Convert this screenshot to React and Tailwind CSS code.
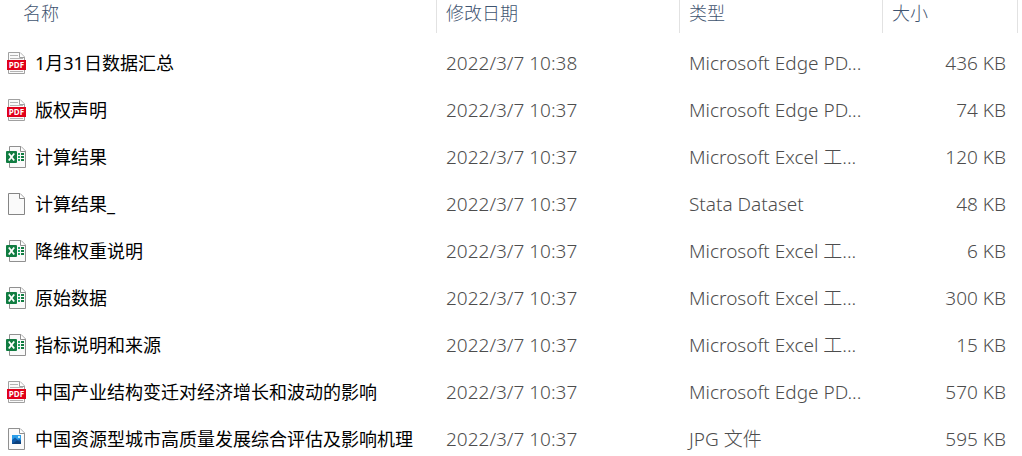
const files = [
  { name: '1月31日数据汇总', kind: 'pdf', date: '2022/3/7 10:38', type: 'Microsoft Edge PD...', size: '436 KB' },
  { name: '版权声明', kind: 'pdf', date: '2022/3/7 10:37', type: 'Microsoft Edge PD...', size: '74 KB' },
  { name: '计算结果', kind: 'excel', date: '2022/3/7 10:37', type: 'Microsoft Excel 工...', size: '120 KB' },
  { name: '计算结果_', kind: 'blank', date: '2022/3/7 10:37', type: 'Stata Dataset', size: '48 KB' },
  { name: '降维权重说明', kind: 'excel', date: '2022/3/7 10:37', type: 'Microsoft Excel 工...', size: '6 KB' },
  { name: '原始数据', kind: 'excel', date: '2022/3/7 10:37', type: 'Microsoft Excel 工...', size: '300 KB' },
  { name: '指标说明和来源', kind: 'excel', date: '2022/3/7 10:37', type: 'Microsoft Excel 工...', size: '15 KB' },
  { name: '中国产业结构变迁对经济增长和波动的影响', kind: 'pdf', date: '2022/3/7 10:37', type: 'Microsoft Edge PD...', size: '570 KB' },
  { name: '中国资源型城市高质量发展综合评估及影响机理', kind: 'image', date: '2022/3/7 10:37', type: 'JPG 文件', size: '595 KB' },
];

function Sheet({ stroke }) {
  return (
    <g fill="#fafafa" stroke={stroke}>
      <path d="M2.5 .5H14L18.5 5V21.5H2.5Z" />
      <path d="M13.5 .5V5.5H18.5" fill="#fff" />
    </g>
  );
}

function FileIcon({ kind }) {
  return (
    <svg viewBox="0 0 20 22" className="h-[22px] w-5 shrink-0" aria-hidden="true">
      {kind === 'pdf' && (
        <>
          <Sheet stroke="#a0a0a0" />
          <path d="M4 3.5H12M4 6.5H17M4 19.5H17" stroke="#b4b4b4" />
          <rect x="1" y="8" width="19" height="10" fill="#e1001a" />
          <text x="10.5" y="16" textAnchor="middle" fill="#fff" className="font-['Open_Sans',sans-serif] text-[8px] font-bold">PDF</text>
        </>
      )}
      {kind === 'excel' && (
        <>
          <path d="M3.5 .5H15L19.5 5V21.5H3.5Z" fill="#fafafa" stroke="#909090" />
          <path d="M14.5 .5V5.5H19.5" fill="#fff" stroke="#909090" />
          <path d="M12 7h2v2h-2zM12 10h2v2h-2zM12 13h2v2h-2z" fill="#21a366" />
          <path d="M15 7h3v2h-3zM15 10h3v2h-3zM15 13h3v2h-3z" fill="#107c41" />
          <rect x="0" y="5" width="11" height="12" rx="1" fill="#107c41" />
          <path d="M2.8 7.5L8.2 14.5M8.2 7.5L2.8 14.5" stroke="#fff" strokeWidth="1.8" />
        </>
      )}
      {kind === 'blank' && <Sheet stroke="#858585" />}
      {kind === 'image' && (
        <>
          <Sheet stroke="#909090" />
          <rect x="6" y="7" width="9" height="9" fill="#2b9de8" />
          <path d="M6 12L9 9.5L12 12L13.5 11L15 12.5V16H6Z" fill="#0f5aa8" />
          <path d="M6 16L11 12.5L15 14V16Z" fill="#0b3f7a" />
          <rect x="12" y="8" width="2" height="2" fill="#c5edff" />
        </>
      )}
    </svg>
  );
}

export default function App() {
  return (
    <main className="h-screen overflow-hidden bg-white pr-1 font-['Noto_Sans','Noto_Sans_CJK_SC',sans-serif] text-lg">
      <table className="w-full table-fixed border-collapse text-left whitespace-nowrap">
        <colgroup>
          <col />
          <col className="w-[243px]" />
          <col className="w-[203px]" />
          <col className="w-[135px]" />
        </colgroup>
        <thead className="text-[#3f5470]">
          <tr>
            {['名称', '修改日期', '类型', '大小'].map((label) => (
              <th key={label} scope="col" className="p-0 pb-1.5 font-light">
                <div className="h-[33px] border-r border-[#e2e2e2] pl-[9px] leading-[26px] [th:first-child_&]:pl-[23px]">
                  {label}
                </div>
              </th>
            ))}
          </tr>
        </thead>
        <tbody className="text-[19px] leading-7 font-light text-[#4d4d4d]">
          {files.map((file) => (
            <tr key={file.name} className="h-[47px]">
              <td className="p-0 text-lg leading-7 font-normal text-black">
                <div className="flex items-center gap-[9px] pl-1.5">
                  <FileIcon kind={file.kind} />
                  <span>{file.name}</span>
                </div>
              </td>
              <td className="p-0 pl-[9px]">{file.date}</td>
              <td className="p-0 pl-[9px]">{file.type}</td>
              <td className="p-0 pr-3 text-right">{file.size}</td>
            </tr>
          ))}
        </tbody>
      </table>
    </main>
  );
}
